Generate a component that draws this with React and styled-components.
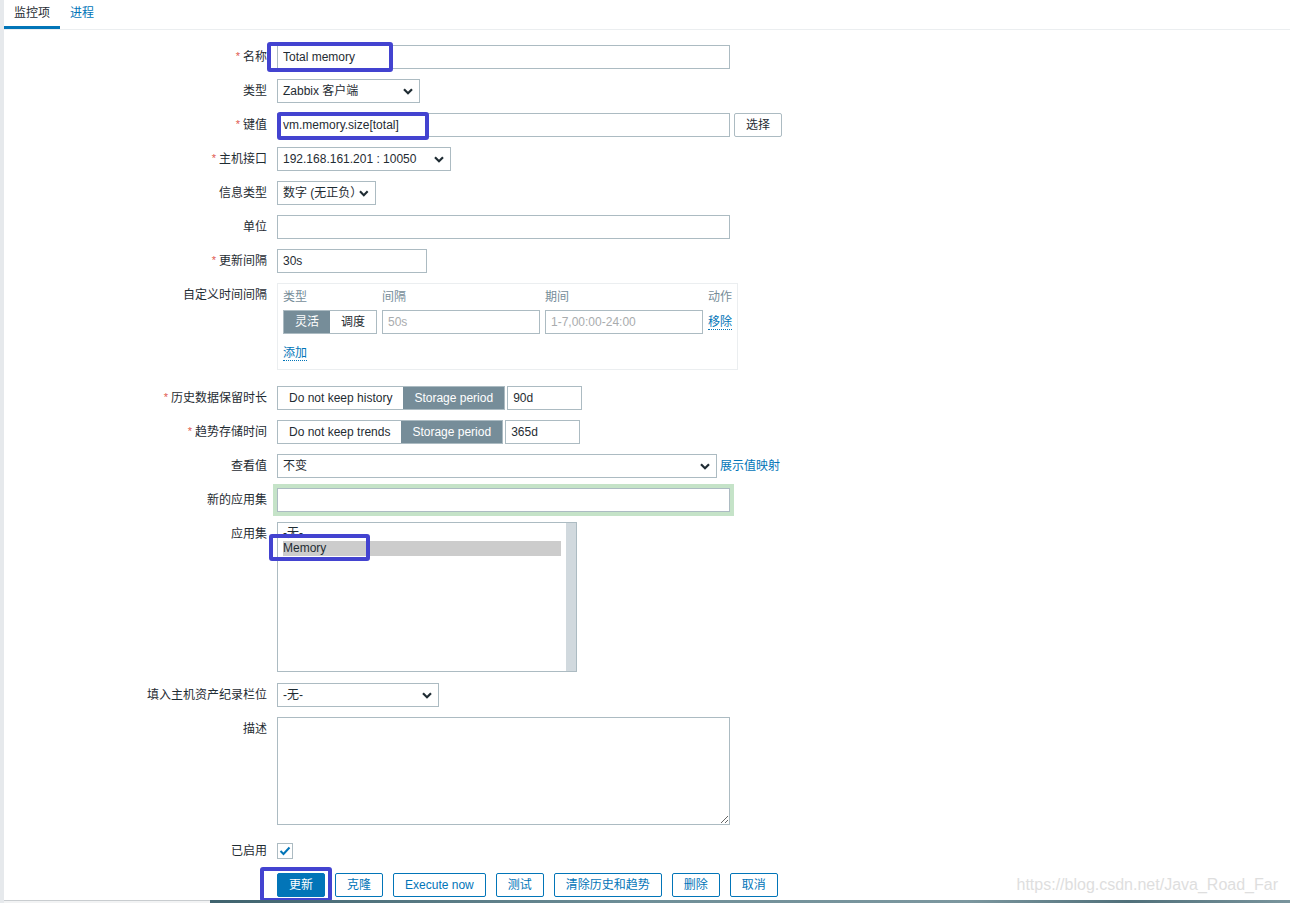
import React from "react";
import styled, { createGlobalStyle } from "styled-components";

const GlobalStyle = createGlobalStyle`
  html, body {
    margin: 0;
    padding: 0;
    background: #ffffff;
  }
  body {
    font-family: "Liberation Sans", Arial, "Noto Sans CJK SC", sans-serif;
    font-size: 12px;
    color: #1f2c33;
    overflow: hidden;
  }
  * {
    box-sizing: border-box;
  }
`;

const Page = styled.div`
  position: relative;
  height: 903px;
  border-left: 4px solid #e6e9ec;
  overflow: hidden;
`;

const TabBar = styled.div`
  display: flex;
  height: 30px;
  border-bottom: 1px solid #ebeef0;
`;

const Tab = styled.div`
  padding: 0 10px;
  line-height: 27px;
  font-size: 12px;
  color: ${(p) => (p.$active ? "#1f2c33" : "#0275b8")};
  border-bottom: 3px solid ${(p) => (p.$active ? "#0275b8" : "transparent")};
`;

const Form = styled.div`
  display: flex;
  flex-direction: column;
  gap: 10px;
  padding-top: 15px;
`;

const Row = styled.div`
  display: grid;
  grid-template-columns: 263px auto;
  column-gap: 10px;
  align-items: start;
  margin-top: ${(p) => p.$mt || 0}px;
`;

const Label = styled.div`
  height: 24px;
  line-height: 24px;
  text-align: right;
  white-space: nowrap;
  overflow: visible;
`;

const Req = styled.span`
  color: #e05a4e;
  font-size: 11px;
  line-height: 0;
  margin-right: 3px;
  position: relative;
  top: -1px;
`;

const Field = styled.div`
  position: relative;
  display: flex;
  align-items: center;
  gap: ${(p) => p.$gap ?? 4}px;
`;

const TextInput = styled.input`
  width: ${(p) => p.$w}px;
  height: 24px;
  border: 1px solid #acbbc2;
  padding: 0 5px;
  margin: 0;
  font: inherit;
  color: #1f2c33;
  background: #fff;
  outline: ${(p) => (p.$glow ? "4px solid #c5e3c8" : "none")};
  &::placeholder {
    color: #a9acae;
  }
`;

const SelectBox = styled.div`
  width: ${(p) => p.$w}px;
  height: 24px;
  border: 1px solid #acbbc2;
  display: flex;
  align-items: center;
  justify-content: space-between;
  padding: 0 6px 0 5px;
  background: #fff;
  line-height: 22px;
  overflow: hidden;
`;

const Chevron = () => (
  <svg width="10" height="7" viewBox="0 0 10 7">
    <path d="M1 1.2 L5 5.2 L9 1.2" fill="none" stroke="#1f2c33" strokeWidth="2.2" />
  </svg>
);

const Select = ({ w, children }) => (
  <SelectBox $w={w}>
    <span>{children}</span>
    <Chevron />
  </SelectBox>
);

const Button = styled.button`
  height: 24px;
  margin: 0;
  padding: 0 11px;
  font: inherit;
  line-height: 22px;
  white-space: nowrap;
  border: 1px solid ${(p) => (p.$plain ? "#acbbc2" : "#0275b8")};
  background: ${(p) => (p.$primary ? "#0275b8" : "#fff")};
  color: ${(p) => (p.$primary ? "#fff" : p.$plain ? "#1f2c33" : "#0275b8")};
  border-radius: 2px;
`;

const Segmented = styled.div`
  display: flex;
  height: 24px;
  border: 1px solid #acbbc2;
`;

const SegBtn = styled.div`
  padding: 0 ${(p) => p.$pad ?? 11}px;
  line-height: 22px;
  white-space: nowrap;
  background: ${(p) => (p.$active ? "#768d99" : "#fff")};
  color: ${(p) => (p.$active ? "#fff" : "#1f2c33")};
`;

const IntervalBox = styled.div`
  width: 461px;
  border: 1px solid #ebeef0;
  padding: 5px 6px 8px 5px;
  display: grid;
  grid-template-columns: 94px 158px 158px auto;
  column-gap: 5px;
  row-gap: 5px;
`;

const HeadCell = styled.div`
  color: #768d99;
  line-height: 16px;
  height: 16px;
`;

const Cell = styled.div`
  display: flex;
  align-items: center;
  height: 24px;
`;

const LinkText = styled.a`
  color: #0275b8;
  text-decoration: none;
  border-bottom: ${(p) => (p.$dotted ? "1px dotted #0275b8" : "none")};
  line-height: 14px;
  white-space: nowrap;
  cursor: pointer;
`;

const AddRow = styled.div`
  grid-column: 1 / -1;
  padding-top: 6px;
  line-height: 16px;
`;

const ListBox = styled.div`
  position: relative;
  width: 300px;
  height: 150px;
  border: 1px solid #acbbc2;
  padding: 3px 15px 0 5px;
`;

const ListItem = styled.div`
  line-height: 15px;
  height: 15px;
  background: ${(p) => (p.$selected ? "#cccccc" : "transparent")};
`;

const ScrollTrack = styled.div`
  position: absolute;
  top: 0;
  right: 0;
  bottom: 0;
  width: 10px;
  background: #d1d9de;
`;

const TextArea = styled.textarea`
  display: block;
  width: 453px;
  height: 108px;
  margin: 0;
  border: 1px solid #acbbc2;
  font: inherit;
  padding: 4px 5px;
  resize: both;
`;

const CheckBox = styled.div`
  width: 16px;
  height: 16px;
  border: 1px solid #acbbc2;
  display: flex;
  align-items: center;
  justify-content: center;
  margin-top: 4px;
`;

const Buttons = styled.div`
  position: relative;
  display: flex;
  gap: 10px;
`;

const Annot = styled.div`
  position: absolute;
  left: ${(p) => p.$l}px;
  top: ${(p) => p.$t}px;
  width: ${(p) => p.$w}px;
  height: ${(p) => p.$h}px;
  border: 4px solid #4343d0;
  border-radius: 3px;
  pointer-events: none;
`;

const Watermark = styled.div`
  position: absolute;
  right: 12px;
  bottom: 9px;
  font-family: "Liberation Sans", Arial, sans-serif;
  font-size: 16px;
  color: #dedede;
`;

const BottomStrip = styled.div`
  position: absolute;
  left: -4px;
  right: 0;
  bottom: 0;
  height: 3px;
  display: flex;
`;

const StripLight = styled.div`
  width: 210px;
  border-top: 1px solid #c9cdd0;
  background: #f2f3f4;
`;

const StripDark = styled.div`
  flex: 1;
  background: linear-gradient(90deg, #3f636e 0%, #6f8f98 40%, #7c979f 70%, #50707a 85%, #7a959d 100%);
`;

const FormRow = ({ label, req, children, mt }) => (
  <Row $mt={mt}>
    <Label>
      {req && <Req>*</Req>}
      {label}
    </Label>
    {children}
  </Row>
);

export default function App() {
  return (
    <Page>
      <GlobalStyle />
      <TabBar>
        <Tab $active>监控项</Tab>
        <Tab>进程</Tab>
      </TabBar>

      <Form>
        <FormRow label="名称" req>
          <Field>
            <TextInput $w={453} defaultValue="Total memory" />
            <Annot $l={-10} $t={-3} $w={126} $h={30} />
          </Field>
        </FormRow>

        <FormRow label="类型">
          <Field>
            <Select w={143}>Zabbix 客户端</Select>
          </Field>
        </FormRow>

        <FormRow label="键值" req>
          <Field>
            <TextInput $w={453} defaultValue="vm.memory.size[total]" />
            <Button $plain>选择</Button>
            <Annot $l={0} $t={-1} $w={152} $h={28} />
          </Field>
        </FormRow>

        <FormRow label="主机接口" req>
          <Field>
            <Select w={174}>192.168.161.201 : 10050</Select>
          </Field>
        </FormRow>

        <FormRow label="信息类型">
          <Field>
            <Select w={99}>数字 (无正负）</Select>
          </Field>
        </FormRow>

        <FormRow label="单位">
          <Field>
            <TextInput $w={453} />
          </Field>
        </FormRow>

        <FormRow label="更新间隔" req>
          <Field>
            <TextInput $w={150} defaultValue="30s" />
          </Field>
        </FormRow>

        <FormRow label="自定义时间间隔">
          <IntervalBox>
            <HeadCell>类型</HeadCell>
            <HeadCell>间隔</HeadCell>
            <HeadCell>期间</HeadCell>
            <HeadCell>动作</HeadCell>
            <Cell>
              <Segmented>
                <SegBtn $active>灵活</SegBtn>
                <SegBtn>调度</SegBtn>
              </Segmented>
            </Cell>
            <Cell>
              <TextInput $w={158} placeholder="50s" />
            </Cell>
            <Cell>
              <TextInput $w={158} placeholder="1-7,00:00-24:00" />
            </Cell>
            <Cell>
              <LinkText $dotted>移除</LinkText>
            </Cell>
            <AddRow>
              <LinkText $dotted>添加</LinkText>
            </AddRow>
          </IntervalBox>
        </FormRow>

        <FormRow label="历史数据保留时长" req mt={6}>
          <Field $gap={2}>
            <Segmented>
              <SegBtn>Do not keep history</SegBtn>
              <SegBtn $active>Storage period</SegBtn>
            </Segmented>
            <TextInput $w={75} defaultValue="90d" />
          </Field>
        </FormRow>

        <FormRow label="趋势存储时间" req>
          <Field $gap={2}>
            <Segmented>
              <SegBtn>Do not keep trends</SegBtn>
              <SegBtn $active>Storage period</SegBtn>
            </Segmented>
            <TextInput $w={75} defaultValue="365d" />
          </Field>
        </FormRow>

        <FormRow label="查看值">
          <Field $gap={3}>
            <Select w={440}>不变</Select>
            <LinkText>展示值映射</LinkText>
          </Field>
        </FormRow>

        <FormRow label="新的应用集">
          <Field>
            <TextInput $w={453} $glow />
          </Field>
        </FormRow>

        <FormRow label="应用集">
          <Field>
            <ListBox>
              <ListItem>-无-</ListItem>
              <ListItem $selected>Memory</ListItem>
              <ScrollTrack />
            </ListBox>
            <Annot $l={-8} $t={12} $w={101} $h={27} />
          </Field>
        </FormRow>

        <FormRow label="填入主机资产纪录栏位" mt={1}>
          <Field>
            <Select w={162}>-无-</Select>
          </Field>
        </FormRow>

        <FormRow label="描述">
          <Field>
            <TextArea />
          </Field>
        </FormRow>

        <FormRow label="已启用" mt={4}>
          <Field>
            <CheckBox>
              <svg width="12" height="10" viewBox="0 0 12 10">
                <path d="M1.5 5 L4.5 8 L10.5 1.5" fill="none" stroke="#0275b8" strokeWidth="2" />
              </svg>
            </CheckBox>
          </Field>
        </FormRow>

        <FormRow label="">
          <Buttons>
            <Button $primary>更新</Button>
            <Button>克隆</Button>
            <Button>Execute now</Button>
            <Button>测试</Button>
            <Button>清除历史和趋势</Button>
            <Button>删除</Button>
            <Button>取消</Button>
            <Annot $l={-17} $t={-6} $w={72} $h={35} />
          </Buttons>
        </FormRow>
      </Form>

      <Watermark>https://blog.csdn.net/Java_Road_Far</Watermark>
      <BottomStrip>
        <StripLight />
        <StripDark />
      </BottomStrip>
    </Page>
  );
}
